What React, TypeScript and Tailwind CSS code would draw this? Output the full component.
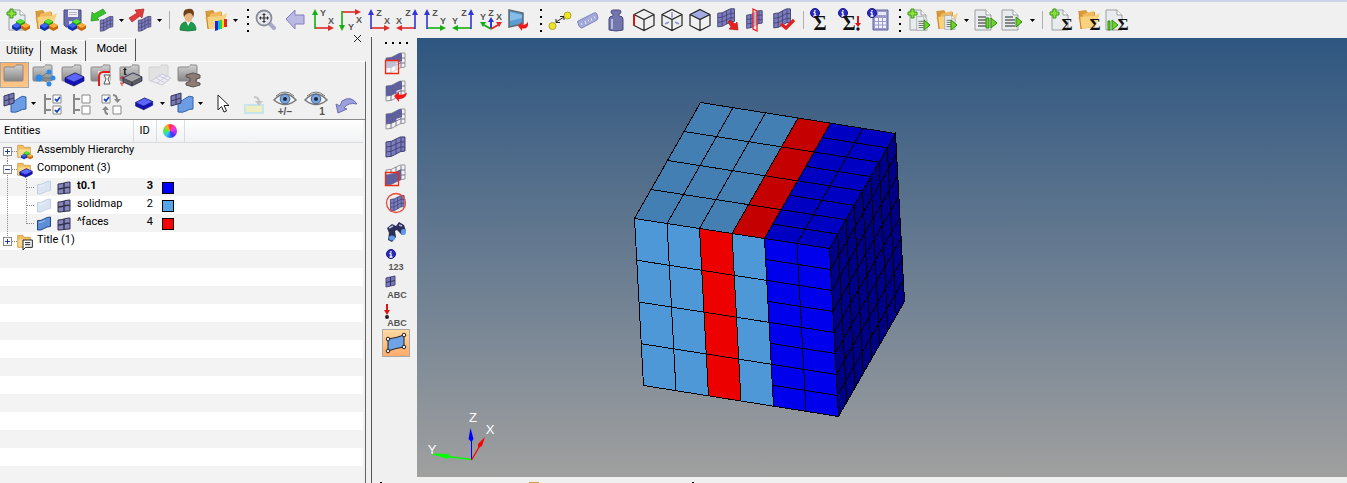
import { useState, type ReactNode } from 'react';

type Point = [number, number];

const GREEN = '#12b012';
const RED = '#e02a2a';
const BLUE = '#3434d8';

/* ---------- Icon building blocks ---------- */

function Icon({ children }: { children: ReactNode }) {
  return (
    <svg viewBox="0 0 24 24" className="h-6 w-6 shrink-0 overflow-visible" aria-hidden="true">
      {children}
    </svg>
  );
}

function Page({ x = 2, lines = true }: { x?: number; lines?: boolean }) {
  return (
    <g transform={`translate(${x} 0)`}>
      <path d="M1 2h11l5 5v15H1z" fill="#e9ecee" stroke="#9a9fa3" />
      <path d="M12 2v5h5" fill="#fff" stroke="#9a9fa3" />
      {lines && <path d="M4 9h8M4 12h10M4 15h10M4 18h10" stroke="#666" strokeWidth="1.3" />}
    </g>
  );
}

function FolderShape() {
  return (
    <>
      <path d="M2 3l7-1 2 3 7-1v15L4 21z" fill="#d99a3c" />
      <path d="M6 6l11-3v12l-11 4z" fill="#f0b95e" />
      <path d="M1 9l16-1 6-3-4 13-14 3z" fill="#f9d27f" />
      <path d="M2 3l2 18" stroke="#c98a30" strokeWidth="1.2" />
    </>
  );
}

function Block({ x, y, top, side }: { x: number; y: number; top: string; side: string }) {
  return (
    <g transform={`translate(${x} ${y})`}>
      <path d="M0 2.5L4.5 0 9 2.5v3L4.5 8 0 5.5z" fill={side} />
      <path d="M0 2.5L4.5 0 9 2.5 4.5 5z" fill={top} />
    </g>
  );
}

function Blocks() {
  return (
    <>
      <Block x={10} y={11} top="#58e038" side="#1d9c14" />
      <Block x={6} y={15} top="#3b67f0" side="#1231b4" />
      <Block x={15} y={15} top="#ffad3a" side="#c76a0c" />
    </>
  );
}

function Plus() {
  return <path d="M4 1h3v3h3v3H7v3H4V7H1V4h3z" fill="#8be23c" stroke="#3c9a1c" />;
}

function InfoDot({ x = 5, y = 5 }: { x?: number; y?: number }) {
  return (
    <g transform={`translate(${x} ${y})`}>
      <circle r="4.5" fill="#2a2ac4" stroke="#17178c" />
      <path d="M0 -3v1.5M0 -.5V3M-1.5 -.5H0M-1.5 3h3" stroke="#fff" strokeWidth="1.3" />
    </g>
  );
}

function Label({ x, y, size = 9, fill = '#555', children }: {
  x: number;
  y: number;
  size?: number;
  fill?: string;
  children: string;
}) {
  return (
    <text x={x} y={y} fontSize={size} fontWeight="bold" fill={fill} textAnchor="middle" fontFamily="Liberation Sans, sans-serif">
      {children}
    </text>
  );
}

function Sigma({ x = 14, y = 22, size = 20 }: { x?: number; y?: number; size?: number }) {
  return (
    <text x={x} y={y} fontSize={size} fontWeight="bold" fill="#111" textAnchor="middle" fontFamily="Liberation Serif, serif">
      Σ
    </text>
  );
}

function Play({ x, y }: { x: number; y: number }) {
  return <path d={`M${x} ${y}l6 5-6 5z`} fill="#6bd425" stroke="#2f8c12" />;
}

const MESH = 'M2 7Q8 7 12 4T21 2V16Q16 16 12 19T2 22z';
const MESH_GRID = 'M2 12Q8 12 12 9T21 7M2 17Q8 17 12 14T21 12M7 6.5v15M12 4v15M17 2.5v14';

function Mesh({ kind = 'full' }: { kind?: 'full' | 'upper' | 'lower' }) {
  return (
    <>
      <path d={MESH} fill={kind === 'full' ? '#7b7bbd' : '#f2f2f2'} stroke={kind === 'full' ? '#3f3f70' : '#999'} />
      {kind === 'upper' && <path d="M2 7Q8 7 12 4T18 2.5V10L12 12 12 14 7 16.5 2 17z" fill="#5d5da6" />}
      {kind === 'lower' && <path d="M2 12Q8 12 12 9T17 7V17L12 19Q8 22 2 22z" fill="#5d5da6" />}
      <path d={MESH_GRID} fill="none" stroke={kind === 'full' ? '#3f3f70' : '#666688'} strokeWidth=".9" />
    </>
  );
}

function Axes({ v, h, vLabel, hLabel, flip, down }: {
  v: string;
  h: string;
  vLabel: string;
  hLabel: string;
  flip?: boolean;
  down?: boolean;
}) {
  const arms = (
    <>
      <path d="M4 20H18" stroke={h} strokeWidth="1.6" />
      <path d="M17 17l6 3-6 3z" fill={h} />
      <path d="M4 21V6" stroke={v} strokeWidth="1.6" />
      <path d="M1 7l3-6 3 6z" fill={v} />
    </>
  );
  const place = flip ? 'translate(24 0) scale(-1 1)' : down ? 'translate(-1 24) scale(1 -1)' : undefined;
  return (
    <Icon>
      <g transform={place}>{arms}</g>
      <Label x={flip ? 13 : 12} y={down ? 22 : 8}>{vLabel}</Label>
      <Label x={flip ? 4 : 20} y={down ? 15 : 16}>{hLabel}</Label>
    </Icon>
  );
}

function Sheet({ faded }: { faded?: boolean }) {
  return (
    <svg viewBox="0 0 14 15" className="h-[15px] w-3.5 shrink-0" aria-hidden="true">
      <path
        d="M.5 4.5Q4 5 7 3T13.5 1V10.5Q10 10.5 7 12.5T.5 14z"
        fill={faded ? '#dbe4f2' : '#5c8fd8'}
        stroke={faded ? '#c3d0e4' : '#1f4787'}
      />
      <path d="M2 6.5Q6 6 8 4.5" fill="none" stroke={faded ? '#f0f5fb' : '#a5c7f2'} />
    </svg>
  );
}

function MeshTile() {
  return (
    <svg viewBox="0 0 14 14" className="h-3.5 w-3.5 shrink-0" aria-hidden="true">
      <path d="M1 3Q4 3 7 2T13 1V12Q10 12 7 12.5T1 13z" fill="#8686bd" stroke="#33334f" />
      <path d="M7 2v11M1 8Q4 8 7 7T13 6.5" fill="none" stroke="#33334f" strokeWidth="1.5" />
    </svg>
  );
}

function Slab({ top = '#5a66ff', side = '#1212c4' }: { top?: string; side?: string }) {
  return (
    <>
      <path d="M4 15l10-5 9 4v4l-10 5-9-4z" fill={side} stroke="#15154a" strokeWidth=".7" />
      <path d="M4 15l10-5 9 4-10 5z" fill={top} stroke="#15154a" strokeWidth=".5" />
      <path d="M13 19v4" stroke="#15154a" strokeWidth=".7" />
    </>
  );
}

function GrayFolder({ faded }: { faded?: boolean }) {
  return (
    <path
      d="M1 5q0-1 1-1h9q1 0 2-1.5t2-.5h4q1 0 1 1v14q0 1-1 1H2q-1 0-1-1z"
      fill={faded ? '#e2e2e2' : 'url(#gray-folder)'}
      stroke={faded ? '#d2d2d2' : '#888'}
    />
  );
}

function CubeWire() {
  return <path d="M12 1.5l10 5v11l-10 5-10-5v-11zM2 6.5l10 5 10-5M12 11.5v11" fill="none" stroke="#222" strokeWidth="1.2" />;
}

function Shell() {
  return (
    <>
      <path d="M8 9Q13 9 16 6T23 5V17Q19 17 16 19T8 20z" fill="#6c9ce4" stroke="#3162a8" />
      <path d="M1 4l10-3v10L1 14z" fill="#7a7ab5" stroke="#35355f" />
      <path d="M6 2.5v10M1 9l10-3" stroke="#35355f" />
    </>
  );
}

function CheckTree({ checked }: { checked?: boolean }) {
  return (
    <Icon>
      <path d="M4 2v20M4 7h6M4 18h6" stroke="#888" strokeWidth="2" fill="none" />
      {[3, 14].map((y) => (
        <g key={y}>
          <path d={`M12 ${y}h8v8h-8z`} fill="#fff" stroke="#888" />
          {checked && <path d={`M14 ${y + 4}l2 2 3-4`} stroke="#1745c8" strokeWidth="1.8" fill="none" />}
        </g>
      ))}
    </Icon>
  );
}

function Eye({ label }: { label: string }) {
  return (
    <Icon>
      <path d="M1 8Q12-4 23 8 12 17 1 8z" fill="#eef2f6" stroke="#777" strokeWidth="1.5" />
      <circle cx="12" cy="7" r="4.8" fill="#7fa6dc" stroke="#44628f" />
      <circle cx="12" cy="7" r="2" fill="#17273f" />
      <path d="M3 4Q12-4 21 4" fill="none" stroke="#777" />
      <Label x={label === '1' ? 18 : 12} y={23} size={10}>{label}</Label>
    </Icon>
  );
}

/* ---------- Top toolbar ---------- */

type Item =
  | { kind: 'button'; label: string; icon: ReactNode }
  | { kind: 'caret'; label: string }
  | { kind: 'line' }
  | { kind: 'grip' };

const button = (label: string, icon: ReactNode): Item => ({ kind: 'button', label, icon });

const TOOLBAR: Item[] = [
  button('New model', <Icon><Page x={2} lines={false} /><Plus /><Blocks /></Icon>),
  button('Open model', <Icon><FolderShape /><Blocks /></Icon>),
  button('Save model', (
    <Icon>
      <path d="M2 2h17v17H4l-2-2z" fill="#6a6aae" stroke="#48487c" />
      <path d="M6 2h10v7H6z" fill="#eef0f6" />
      <path d="M7 13h7v6H7z" fill="#d6d9e6" />
      <path d="M7 4.5h8M7 6.5h8" stroke="#b5b8ca" />
      <Blocks />
    </Icon>
  )),
  button('Import', (
    <Icon>
      <g transform="translate(9 7) scale(.66 .74)"><Mesh /></g>
      <path d="M1 13l1-9 2 2 9-5 3 4-9 5 2 2z" fill="#35c526" stroke="#1c8414" strokeWidth=".6" />
    </Icon>
  )),
  { kind: 'caret', label: 'Import options' },
  button('Export', (
    <Icon>
      <g transform="translate(9 7) scale(.66 .74)"><Mesh /></g>
      <path d="M16 1l-2 9-2-2-8 6-3-4 8-5-2-3z" fill="#e23b3b" stroke="#a01a1a" strokeWidth=".6" />
    </Icon>
  )),
  { kind: 'caret', label: 'Export options' },
  { kind: 'line' },
  button('User profiles', (
    <Icon>
      <path d="M4 22q0-7 5-8h6q5 2 5 8-8 2-16 0z" fill="#1f9a4c" stroke="#10672f" strokeWidth=".7" />
      <path d="M10 13l2 5 3-5z" fill="#f4f4f0" />
      <ellipse cx="12.5" cy="8" rx="4.3" ry="6" fill="#e5b584" />
      <path d="M8 9Q6 1 12 1q6-1 6 5l-1 4q0-4-3-5-4 0-6 4z" fill="#6e4119" />
    </Icon>
  )),
  button('Colour settings', (
    <Icon>
      <FolderShape />
      <path d="M11 13h3v9l-3 1z" fill="#1525d8" />
      <path d="M14 12.5h2v9h-2z" fill="#16b5ee" />
      <path d="M16 12h2v9h-2z" fill="#36cf35" />
      <path d="M18 12h2v8h-2z" fill="#f4dd20" />
      <path d="M20 11h3v8h-3z" fill="#e8261c" />
    </Icon>
  )),
  { kind: 'caret', label: 'Colour options' },
  { kind: 'grip' },
  button('Fit view', (
    <Icon>
      <path d="M14 15l5 5" stroke="#a8a8c8" strokeWidth="4" strokeLinecap="round" />
      <circle cx="9" cy="10" r="7.5" fill="#e6e8ee" stroke="#888d99" strokeWidth="1.8" />
      <path d="M9 5l2 2H7zM9 15l2-2H7zM4 10l2 2V8zM14 10l-2 2V8z" fill="#333" />
      <path d="M9 6v8M5 10h8" stroke="#333" strokeWidth="1.2" />
    </Icon>
  )),
  button('Previous view', (
    <Icon><path d="M3 11L12 2v5h9v9h-9v5z" fill="#b9b9e4" stroke="#8080b8" /></Icon>
  )),
  button('XY top view', <Axes v={GREEN} h={RED} vLabel="Y" hLabel="X" />),
  button('XY bottom view', <Axes v={GREEN} h={RED} vLabel="Y" hLabel="X" down />),
  button('XZ left view', <Axes v={BLUE} h={RED} vLabel="Z" hLabel="X" />),
  button('XZ right view', <Axes v={BLUE} h={RED} vLabel="Z" hLabel="X" flip />),
  button('YZ front view', <Axes v={BLUE} h={GREEN} vLabel="Z" hLabel="Y" />),
  button('YZ rear view', <Axes v={BLUE} h={GREEN} vLabel="Z" hLabel="Y" flip />),
  button('Isometric view', (
    <Icon>
      <path d="M12 20V12" stroke={BLUE} strokeWidth="2" />
      <path d="M9 14l3-5 3 5z" fill={BLUE} />
      <path d="M12 21l-7-4" stroke={GREEN} strokeWidth="2" />
      <path d="M1 14h6l-3 5z" fill={GREEN} />
      <path d="M12 21l7-4" stroke={RED} strokeWidth="2" />
      <path d="M23 14h-6l3 5z" fill={RED} />
      <Label x={4} y={12}>Y</Label>
      <Label x={12} y={8}>Z</Label>
      <Label x={20} y={12}>X</Label>
    </Icon>
  )),
  button('Apply view', (
    <Icon>
      <path d="M2 2l14 3v11l-14 3z" fill="#5b9bd0" stroke="#5d6875" strokeWidth="1.5" />
      <path d="M3 4l12 3v3L3 13z" fill="#86bce6" />
      <path d="M11 18l4-4v2.5q4 1 6-3 1 8-6 7V23z" fill="#f01818" />
    </Icon>
  )),
  { kind: 'grip' },
  button('Measure distance', (
    <Icon>
      <path d="M8 14l8-5M8 11v3.5h4M12 8.5h4V12" stroke="#222" fill="none" />
      <circle cx="4.5" cy="18" r="3.5" fill="#ede52a" stroke="#b5a61a" />
      <circle cx="19.5" cy="7.5" r="3.5" fill="#ede52a" stroke="#b5a61a" />
    </Icon>
  )),
  button('Ruler', (
    <Icon>
      <path d="M2 15q-1-1 0-2L18 5q2-1 3 1l1 4-1 2L6 20q-2 0-3-2z" fill="#a2a8da" stroke="#8289bd" />
      <path d="M5 15l1 2M9 13l1 3M12 11.5l1 2M15 10l1 3M18 8.5l1 2" stroke="#e7e8f7" />
    </Icon>
  )),
  button('Mass', (
    <Icon>
      <path d="M5 11q0-3 4-3V6q-2 0-2-2t2-2h6q2 0 2 2t-2 2v2q4 0 4 3v11q-7 2-14 0z" fill="#7276ac" stroke="#484c80" />
      <path d="M8 11v10" stroke="#b4b7dd" strokeWidth="2" />
    </Icon>
  )),
  button('Edge', <Icon><CubeWire /><path d="M2 6.5v11" stroke="#e01414" strokeWidth="2" /></Icon>),
  button('Transparent', (
    <Icon><CubeWire /><path d="M12 4v6M5 16l4-2M19 16l-4-2" stroke="#8c92d0" strokeWidth="1.5" /></Icon>
  )),
  button('Face', <Icon><path d="M12 1.5l10 5-10 5-10-5z" fill="#a3a9e2" /><CubeWire /></Icon>),
  button('Find elements', (
    <Icon>
      <g transform="translate(0 -1) scale(.88 .9)"><Mesh /></g>
      <path d="M12 14l2-2 5 4 2-2 1 8-9-1 2-2z" fill="#ea2020" stroke="#a01010" strokeWidth=".6" />
    </Icon>
  )),
  button('Section cut', (
    <Icon>
      <g transform="translate(1 1) scale(.82 .88)"><Mesh /></g>
      <path d="M9 1l4 2v20l-4-2z" fill="#f5e3e3" fillOpacity=".6" stroke="#f02020" strokeWidth="1.3" />
    </Icon>
  )),
  button('Check elements', (
    <Icon>
      <g transform="translate(0 -1) scale(.88 .95)"><Mesh /></g>
      <path d="M9 16l5 4 8-8" fill="none" stroke="#e02020" strokeWidth="3.2" />
    </Icon>
  )),
  { kind: 'line' },
  button('Summary', <Icon><InfoDot x={5} /><Sigma x={10} /></Icon>),
  button('Summary check', (
    <Icon>
      <InfoDot x={5} />
      <Sigma x={11} />
      <path d="M20 8v8" stroke="#e01414" strokeWidth="2" />
      <path d="M17 15h6l-3 4z" fill="#e01414" />
      <circle cx="20" cy="21" r="1.7" fill="#111" />
    </Icon>
  )),
  button('Calculator', (
    <Icon>
      <path d="M7 2h15v20H7z" fill="#9a9cd0" stroke="#63659c" />
      <path d="M12 4h8v3h-8z" fill="#e8e9f5" />
      <path d="M9 10h11v10H9z" fill="#f1f1fa" />
      <path d="M12.5 10v10M16.5 10v10M9 13.5h11M9 17h11" stroke="#9a9cd0" />
      <InfoDot x={6} />
    </Icon>
  )),
  { kind: 'grip' },
  button('New script', (
    <Icon>
      <Page x={2} lines={false} />
      <g transform="translate(9 7) scale(.65 .7)"><Page x={0} /></g>
      <Plus />
      <Play x={17} y={12} />
    </Icon>
  )),
  button('Open script', (
    <Icon>
      <FolderShape />
      <g transform="translate(9 6) scale(.65 .7)"><Page x={0} /></g>
      <Play x={16} y={12} />
    </Icon>
  )),
  { kind: 'caret', label: 'Script options' },
  button('Step script', <Icon><Page x={1} /><path d="M13 10h3v10h-3z" fill="#6bd425" stroke="#2f8c12" /><Play x={18} y={10} /></Icon>),
  button('Run script', <Icon><Page x={0} /><Play x={15} y={9} /></Icon>),
  { kind: 'caret', label: 'Run options' },
  { kind: 'line' },
  button('New sum', <Icon><Page x={2} lines={false} /><Plus /><Sigma x={18} size={17} /></Icon>),
  button('Open sum', <Icon><FolderShape /><Sigma x={18} size={17} /></Icon>),
  button('Run sum', (
    <Icon>
      <Page x={0} lines={false} />
      <path d="M3 13h2v9H3z" fill="#6bd425" stroke="#2f8c12" />
      <Play x={7} y={12} />
      <Sigma x={18} size={17} />
    </Icon>
  )),
];

function Caret() {
  return (
    <svg viewBox="0 0 5 3" className="h-[3px] w-[5px]" aria-hidden="true">
      <path d="M0 0h5L2.5 3z" fill="#000" />
    </svg>
  );
}

function TopToolbar() {
  return (
    <header className="flex h-[34px] items-center border-t-2 border-[#cdd4ea] pt-1 pl-1">
      {TOOLBAR.map((item, i) => {
        if (item.kind === 'line') {
          return (
            <div key={i} className="flex w-2.5 shrink-0 justify-center">
              <div className="h-[18px] w-px bg-[#b0b0b0]" />
            </div>
          );
        }
        if (item.kind === 'grip') {
          return (
            <div key={i} className="flex w-[13px] shrink-0 flex-col items-end gap-[5px] pr-1">
              {[0, 1, 2, 3].map((n) => (
                <div key={n} className="h-0.5 w-0.5 bg-black" />
              ))}
            </div>
          );
        }
        if (item.kind === 'caret') {
          return (
            <button key={i} type="button" aria-label={item.label} className="flex h-6 w-2.5 shrink-0 items-center justify-center">
              <Caret />
            </button>
          );
        }
        return (
          <button key={i} type="button" aria-label={item.label} className="flex h-7 w-7 shrink-0 items-center justify-center">
            {item.icon}
          </button>
        );
      })}
    </header>
  );
}

/* ---------- Model browser ---------- */

const VIEWS: { label: string; icon: ReactNode }[] = [
  { label: 'Model view', icon: <Icon><GrayFolder /></Icon> },
  {
    label: 'Include view',
    icon: (
      <Icon>
        <GrayFolder />
        <path d="M8 15l10-7M8 15h12M8 15l10 6" stroke="#777" />
        <circle cx="7" cy="15" r="3.5" fill="#2a8be8" />
        <circle cx="17" cy="9" r="2.5" fill="#2a8be8" />
        <circle cx="21" cy="15" r="2.5" fill="#2a8be8" />
        <circle cx="17" cy="21" r="2.5" fill="#2a8be8" />
      </Icon>
    ),
  },
  { label: 'Component view', icon: <Icon><GrayFolder /><Slab /></Icon> },
  {
    label: 'Property view',
    icon: (
      <Icon>
        <GrayFolder />
        <path d="M8 8h12v15H8z" fill="#e9e9e9" />
        <path d="M9 23V14q0-5 4-5h7" fill="none" stroke="#e51c1c" strokeWidth="2" />
        <path d="M14 12h6l-2 4 2 5h-6l2-5z" fill="#fff" stroke="#555" />
      </Icon>
    ),
  },
  {
    label: 'Thickness view',
    icon: (
      <Icon>
        <GrayFolder />
        <Label x={6} y={12} size={10} fill="#111">t</Label>
        <path d="M1 15h4M1 20h4M3 13v2M3 20v3" stroke="#d42020" />
        <Slab top="#a5a5a5" side="#5f5f5f" />
      </Icon>
    ),
  },
  {
    label: 'Connector view',
    icon: (
      <Icon>
        <GrayFolder faded />
        <path d="M3 18l11-7 9 4-9 7zM8 15l9 5M11 13l9 4M9 20l10-7" fill="#ececf5" stroke="#cacadb" />
      </Icon>
    ),
  },
  {
    label: 'Section view',
    icon: (
      <Icon>
        <GrayFolder />
        <path d="M9 12l7-2 7 2v3l-4 1v3l4 1v2l-7 2-7-2v-2l4-2v-3l-4-1z" fill="#8c7c78" stroke="#5d504e" />
      </Icon>
    ),
  },
];

interface Tool {
  label: string;
  icon: ReactNode;
  caret?: boolean;
  wide?: boolean;
}

// one array per visual group
const TOOL_GROUPS: Tool[][] = [
  [
    { label: 'Entity display', icon: <Icon><Shell /></Icon>, caret: true },
    { label: 'Show all', icon: <CheckTree checked /> },
    { label: 'Hide all', icon: <CheckTree /> },
    {
      label: 'Reverse display',
      icon: (
        <Icon>
          <path d="M3 3h8v8H3zM14 14h8v8h-8z" fill="#fff" stroke="#888" />
          <path d="M5 7l2 2 3-4" stroke="#1745c8" strokeWidth="1.8" fill="none" />
          <path d="M14 3q4 0 4 5M9 22q-3 0-3-5" stroke="#888" strokeWidth="2" fill="none" />
          <path d="M15 7h7l-3.5 4zM3 18h7l-3.5-4z" fill="#888" />
        </Icon>
      ),
    },
  ],
  [
    {
      label: 'Component selector',
      icon: <Icon><g transform="translate(0 -3) scale(.9)"><Slab /></g></Icon>,
      caret: true,
    },
    { label: 'Geometry and mesh', icon: <Icon><Shell /></Icon>, caret: true },
    {
      label: 'Select',
      icon: (
        <Icon>
          <path d="M10 3v15l3.5-3.5L16 20l2.5-1-2.5-5.5H21z" fill="#fff" stroke="#222" />
        </Icon>
      ),
    },
  ],
  [
    {
      label: 'Add to panel',
      icon: (
        <Icon>
          <path d="M3 13h18v8H3z" fill="#f0edc0" stroke="#c5e6ea" strokeWidth="2" />
          <path d="M12 5q5 0 5 5" stroke="#c5c5c5" strokeWidth="2" fill="none" />
          <path d="M13 9h8l-4 5z" fill="#c5c5c5" />
        </Icon>
      ),
      wide: true,
    },
    { label: 'Show and hide', icon: <Eye label="+/−" />, wide: true },
    { label: 'Isolate', icon: <Eye label="1" />, wide: true },
    {
      label: 'Undo',
      icon: (
        <Icon>
          <path d="M1 12l2 9 9-4-3-1q4-6 13-4Q16 3 7 9l-2 5z" fill="#9da0dc" stroke="#6c6fae" />
        </Icon>
      ),
      wide: true,
    },
  ],
];

interface Entity {
  name: string;
  id: number;
  color: string;
  shown: boolean;
  current?: boolean;
}

const ENTITIES: Entity[] = [
  { name: 't0.1', id: 3, color: 'bg-[#0000ff]', shown: false, current: true },
  { name: 'solidmap', id: 2, color: 'bg-[#55a4e8]', shown: false },
  { name: '^faces', id: 4, color: 'bg-[#ff0000]', shown: true },
];

const TABS = ['Utility', 'Mask', 'Model'];

function Expander({ open, first, last }: { open?: boolean; first?: boolean; last?: boolean }) {
  return (
    <svg viewBox="0 0 17 18" className="h-[18px] w-[17px] shrink-0" shapeRendering="crispEdges" aria-hidden="true">
      <path
        d={`M7.5 ${first ? 9 : 0}V${last ? 9 : 18}M8 8.5h9`}
        stroke="#888"
        strokeDasharray="1 1"
        fill="none"
      />
      <path d="M3.5 4.5h8v8h-8z" fill="#fff" stroke="#8a8a8a" />
      <path d={open ? 'M5 8.5h5' : 'M5 8.5h5M7.5 6v5'} stroke="#1b3c9c" fill="none" />
    </svg>
  );
}

function Guides({ last }: { last: boolean }) {
  return (
    <svg viewBox="0 0 37 18" className="h-[18px] w-[37px] shrink-0" shapeRendering="crispEdges" aria-hidden="true">
      <path
        d={`M7.5 0V18M26.5 0V${last ? 9 : 18}M27 8.5h8`}
        stroke="#888"
        strokeDasharray="1 1"
        fill="none"
      />
    </svg>
  );
}

function SmallFolder({ children }: { children: ReactNode }) {
  return (
    <svg viewBox="0 0 24 24" className="h-4 w-4 shrink-0" aria-hidden="true">
      <path d="M1 2h8l2 3h9v15H1z" fill="#f2c064" stroke="#c58d35" />
      <path d="M2 8h17v11H2z" fill="#f9d98c" />
      {children}
    </svg>
  );
}

function GroupRow({ name, open, first, last, onToggle, children }: {
  name: string;
  open?: boolean;
  first?: boolean;
  last?: boolean;
  onToggle?: () => void;
  children: ReactNode;
}) {
  return (
    <tr className="h-[18px]">
      <td colSpan={4} className="p-0">
        <button type="button" onClick={onToggle} className="flex h-[18px] items-center text-left">
          <Expander open={open} first={first} last={last} />
          <SmallFolder>{children}</SmallFolder>
          <span className="pb-1 pl-1">{name}</span>
        </button>
      </td>
    </tr>
  );
}

function EntityTree() {
  const [open, setOpen] = useState(true);
  return (
    <div className="flex flex-1 flex-col border-t border-[#8a8a8a] pr-0.5">
      <div className="flex-1 bg-[repeating-linear-gradient(#f3f3f3_0px,#f3f3f3_4px,#fff_4px,#fff_22px,#f3f3f3_22px,#f3f3f3_36px)]">
        <table className="w-full table-fixed border-collapse">
          <colgroup>
            <col className="w-[133px]" />
            <col className="w-[23px]" />
            <col className="w-[28px]" />
            <col />
          </colgroup>
          <thead>
            <tr className="h-[22px] bg-linear-to-b from-white to-[#f1f2f4] text-left">
              <th className="border-r border-b border-[#d9dde2] p-0 pl-1 font-normal">Entities</th>
              <th className="border-r border-b border-[#d9dde2] p-0 text-center font-normal">ID</th>
              <th className="border-r border-b border-[#d9dde2] p-0">
                <div
                  role="img"
                  aria-label="Color"
                  className="mx-auto h-3.5 w-3.5 rounded-full bg-[conic-gradient(#f33_0deg,#f3c_50deg,#c3e_90deg,#33f_150deg,#3ce_220deg,#5e3_280deg,#fa3_330deg,#f33_360deg)]"
                />
              </th>
              <th className="border-b border-[#d9dde2] p-0" aria-label="Notes" />
            </tr>
          </thead>
          <tbody>
            <GroupRow name="Assembly Hierarchy" first><Blocks /></GroupRow>
            <GroupRow name="Component (3)" open={open} onToggle={() => setOpen(!open)}>
              <Slab />
            </GroupRow>
            {open && ENTITIES.map((entity, i) => (
              <tr key={entity.id} className={entity.current ? 'h-[18px] font-bold' : 'h-[18px]'}>
                <td className="p-0">
                  <div className="flex h-[18px] items-center">
                    <Guides last={i === ENTITIES.length - 1} />
                    <Sheet faded={!entity.shown} />
                    <span className="w-1.5" />
                    <MeshTile />
                    <span className="pb-1 pl-1.5">{entity.name}</span>
                  </div>
                </td>
                <td className="p-0 pr-[3px] pb-1 text-right">{entity.id}</td>
                <td className="p-0 pl-1.5">
                  <div className={`h-3 w-3 border border-black ${entity.color}`} />
                </td>
                <td className="p-0" />
              </tr>
            ))}
            <GroupRow name="Title (1)" last>
              <path d="M9 9h14v11H13l-4 4z" fill="#fff" stroke="#222" strokeWidth="1.5" />
              <path d="M12 13h8M12 16h8" stroke="#222" strokeWidth="1.5" />
            </GroupRow>
          </tbody>
        </table>
      </div>
    </div>
  );
}

function ModelBrowser() {
  const [tab, setTab] = useState('Model');
  return (
    <section className="flex w-[366px] shrink-0 flex-col">
      <div className="flex h-[27px] items-end">
        <div role="tablist" className="flex items-end gap-0.5">
          {TABS.map((name) => (
            <button
              key={name}
              type="button"
              role="tab"
              aria-selected={tab === name}
              onClick={() => setTab(name)}
              className={
                tab === name
                  ? 'h-[23px] border-t border-r border-t-white border-r-[#555] px-2 pb-0.5'
                  : 'h-[21px] border-t border-r border-t-white border-r-[#555] px-2 first:px-1.5'
              }
            >
              {name}
            </button>
          ))}
        </div>
        <button type="button" aria-label="Close" className="mr-1 ml-auto self-start">
          <svg viewBox="0 0 9 9" className="h-[9px] w-[9px]" aria-hidden="true">
            <path d="M1 1l7 7M8 1l-7 7" stroke="#222" />
          </svg>
        </button>
      </div>

      <div className="flex flex-1 flex-col border-t border-r border-t-white border-r-[#666]">
        <div className="flex h-[26px] items-center">
          {VIEWS.map((view, i) => (
            <button
              key={view.label}
              type="button"
              aria-label={view.label}
              className={
                i === 0
                  ? 'flex h-[26px] w-[29px] items-center justify-center border border-[#a9a9a9] bg-linear-to-b from-[#fbb36e] to-[#ffc78a]'
                  : 'flex h-[26px] w-[29px] items-center justify-center'
              }
            >
              {view.icon}
            </button>
          ))}
        </div>
        <div className="flex h-[31px] items-center gap-1">
          {TOOL_GROUPS.map((group) => (
            <div key={group[0].label} className="flex shrink-0 items-center">
              {group.map((tool) => (
                <div key={tool.label} className="flex shrink-0 items-center">
                  <button
                    type="button"
                    aria-label={tool.label}
                    className={tool.wide ? 'flex h-7 w-[31px] items-center justify-center' : 'flex h-7 w-[29px] items-center justify-center'}
                  >
                    {tool.icon}
                  </button>
                  {tool.caret && (
                    <button type="button" aria-label={`${tool.label} options`} className="flex h-7 w-[9px] items-center justify-center">
                      <Caret />
                    </button>
                  )}
                </div>
              ))}
            </div>
          ))}
        </div>
        <EntityTree />
      </div>
    </section>
  );
}

/* ---------- Vertical display toolbar ---------- */

const DISPLAY_TOOLS: { label: string; icon: ReactNode }[] = [
  { label: 'Mask', icon: <Icon><Mesh kind="upper" /><path d="M1.5 9.5h13v13h-13z" fill="#fff" fillOpacity=".6" stroke="#f02a14" strokeWidth="1.3" /></Icon> },
  { label: 'Unmask adjacent', icon: <Icon><Mesh kind="upper" /><path d="M10 17l5-4v2.5q4 1 8-2-1 7-8 6.5V23z" fill="#f01818" /></Icon> },
  { label: 'Reverse mask', icon: <Icon><Mesh kind="upper" /></Icon> },
  { label: 'Unmask all', icon: <Icon><Mesh /></Icon> },
  { label: 'Mask outside', icon: <Icon><Mesh kind="lower" /><path d="M1.5 9.5h13v13h-13z" fill="none" stroke="#f02a14" strokeWidth="1.3" /></Icon> },
  {
    label: 'Spherical clip',
    icon: (
      <Icon>
        <g transform="translate(5 3) scale(.72 .78)"><Mesh /></g>
        <circle cx="12" cy="12" r="9.5" fill="none" stroke="#e84a38" strokeWidth="1.3" />
      </Icon>
    ),
  },
  {
    label: 'Find',
    icon: (
      <Icon>
        <path d="M3 9l5-4 4 2 3-4 5 3 2 6-4 4-5-5-2 1 1 6-4 5-4-2 1-7z" fill="#2c2f58" />
        <ellipse cx="8" cy="19" rx="3" ry="2.5" fill="#5e9bee" />
        <ellipse cx="19.5" cy="13" rx="2.5" ry="3" fill="#5e9bee" />
        <path d="M5 9l4-2M15 6l3 1" stroke="#b4bce8" strokeWidth="1.5" />
      </Icon>
    ),
  },
  { label: 'Numbers', icon: <Icon><InfoDot x={7} y={7} /><Label x={12} y={23}>123</Label></Icon> },
  {
    label: 'Element handles',
    icon: (
      <Icon>
        <path d="M2 3l9-2v9l-9 2z" fill="#7878b8" stroke="#4a4a80" />
        <path d="M6.5 2v9M2 7.5l9-2" stroke="#303060" />
        <Label x={13} y={23}>ABC</Label>
      </Icon>
    ),
  },
  {
    label: 'Load handles',
    icon: (
      <Icon>
        <path d="M3 1v8" stroke="#e01414" strokeWidth="2" />
        <path d="M0 7h6l-3 5z" fill="#e01414" />
        <circle cx="3" cy="14" r="2" fill="#222" />
        <Label x={13} y={23}>ABC</Label>
      </Icon>
    ),
  },
  {
    label: 'Fixed points',
    icon: (
      <Icon>
        <path d="M4 8Q12 7 20 4V16Q12 17 4 20z" fill="#6fa3e8" stroke="#222" />
        {[[4, 8], [20, 4], [20, 16], [4, 20]].map(([x, y]) => (
          <circle key={`${x}-${y}`} cx={x} cy={y} r="1.8" fill="#eee" stroke="#222" />
        ))}
      </Icon>
    ),
  },
];

function DisplayToolbar() {
  return (
    <aside className="mt-[3px] ml-[5px] flex w-[46px] shrink-0 flex-col border-l border-[#555]">
      <div className="flex h-3 items-center justify-center gap-[5px] pl-1">
        {[0, 1, 2, 3].map((n) => (
          <div key={n} className="h-0.5 w-0.5 bg-black" />
        ))}
      </div>
      <div className="flex flex-col items-center pl-0.5">
        {DISPLAY_TOOLS.map((tool) => (
          <button
            key={tool.label}
            type="button"
            aria-label={tool.label}
            className={
              tool.label === 'Fixed points'
                ? 'flex h-7 w-7 items-center justify-center border border-[#a9a9a9] bg-linear-to-b from-[#ffd9a0] to-[#ffab6b]'
                : 'flex h-7 w-7 items-center justify-center'
            }
          >
            {tool.icon}
          </button>
        ))}
      </div>
      <div className="mt-auto ml-2 h-px w-0.5 bg-black" />
    </aside>
  );
}

/* ---------- 3D viewport ---------- */

const lerp = (a: Point, b: Point, t: number): Point => [a[0] + (b[0] - a[0]) * t, a[1] + (b[1] - a[1]) * t];

// quad corners run: start-left, start-right, end-right, end-left
type Quad = [Point, Point, Point, Point];

const TOP: Quad = [[700.5, 102.5], [895.5, 133.5], [829.5, 248.5], [634.5, 218.5]];
const FRONT: Quad = [[634.5, 218.5], [829.5, 248.5], [838.5, 416.5], [643.5, 385.5]];
const RIGHT: Quad = [[829.5, 248.5], [895.5, 133.5], [904.5, 301.5], [838.5, 416.5]];

function Face({ quad, colors, rows }: { quad: Quad; colors: string[]; rows: number[] }) {
  const at = (u: number, v: number) => lerp(lerp(quad[0], quad[1], u), lerp(quad[3], quad[2], u), v);
  const cols = colors.length;
  return (
    <>
      {colors.map((color, c) =>
        Array.from({ length: rows[c] }, (_, r) => {
          const u0 = c / cols;
          const u1 = (c + 1) / cols;
          const v0 = r / rows[c];
          const v1 = (r + 1) / rows[c];
          const points = [at(u0, v0), at(u1, v0), at(u1, v1), at(u0, v1)].map((p) => p.join(',')).join(' ');
          return <polygon key={`${c}-${r}`} points={points} fill={color} stroke="#000" />;
        })
      )}
    </>
  );
}

function Viewport() {
  return (
    <main className="mt-1 flex-1 overflow-hidden bg-linear-to-b from-[#2e5680] to-[#a0a09f]">
      <svg
        viewBox="417 38 520 439"
        className="h-[439px] w-[520px] max-w-none"
        role="img"
        aria-label="Meshed cube"
      >
        <g shapeRendering="crispEdges">
          <Face
            quad={TOP}
            colors={['#447fb4', '#447fb4', '#447fb4', '#c40000', '#0000c2', '#0000c2']}
            rows={[4, 4, 4, 4, 8, 8]}
          />
          <Face
            quad={FRONT}
            colors={['#4f98d8', '#4f98d8', '#ec0000', '#4f98d8', '#0000ec', '#0000ec']}
            rows={[4, 4, 4, 4, 8, 8]}
          />
          <Face quad={RIGHT} colors={Array(8).fill('#000086')} rows={Array(8).fill(8)} />
        </g>

        {/* Axis triad */}
        <path d="M471.5 460V436" stroke="#0000ff" />
        <path d="M470.5 428l3 11-2 3-3-3z" fill="#0000ff" />
        <path d="M471.5 460l10-17" stroke="#ff0000" strokeWidth="1.3" />
        <path d="M485 437l-3 9-4 2 0-4z" fill="#ff0000" />
        <path d="M471 459.5L448 456.5 433 454.5" stroke="#00ff00" strokeWidth="1.3" fill="none" />
        <path d="M433 453.5l16 .5v4l-4 .5z" fill="#00ff00" />
        <g fill="#fff" fontSize="13" fontFamily="Liberation Sans, sans-serif" textAnchor="middle">
          <text x="473" y="422">Z</text>
          <text x="490" y="434">X</text>
          <text x="432" y="454">Y</text>
        </g>
      </svg>
    </main>
  );
}

export default function App() {
  return (
    <div className="flex min-h-screen flex-col overflow-hidden bg-[#f0f0f0] font-[Roboto,'Liberation_Sans',Arial,sans-serif] text-[11px] leading-[14px] text-black">
      <svg className="absolute h-0 w-0" aria-hidden="true">
        <defs>
          <linearGradient id="gray-folder" x1="0" y1="0" x2="0" y2="1">
            <stop offset="0" stopColor="#d4d4d4" />
            <stop offset="1" stopColor="#858585" />
          </linearGradient>
        </defs>
      </svg>
      <TopToolbar />
      <div className="flex flex-1">
        <ModelBrowser />
        <DisplayToolbar />
        <div className="flex min-w-0 flex-1 flex-col">
          <Viewport />
          <div className="flex h-1.5 items-end">
            <div className="ml-28 h-px w-2.5 bg-[#d99a3c]" />
            <div className="ml-[153px] h-px w-0.5 bg-black" />
          </div>
        </div>
      </div>
    </div>
  );
}
